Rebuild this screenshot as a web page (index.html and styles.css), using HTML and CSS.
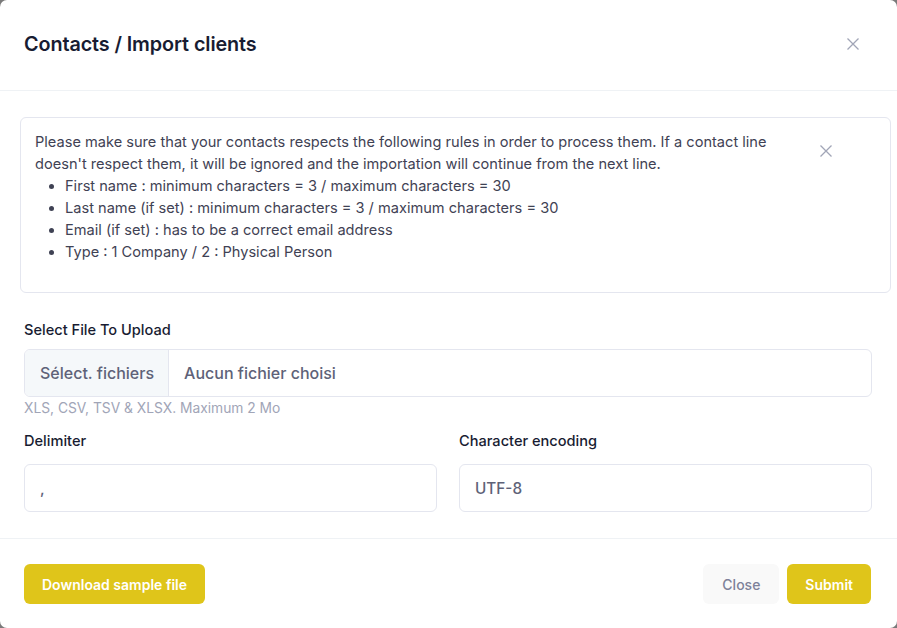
FILE: index.html
```html
<!DOCTYPE html>
<html>
<head>
<meta charset="utf-8">
<link rel="stylesheet" href="styles.css">
</head>
<body>
<div class="modal">
  <div class="modal-header">
    <h2 class="title">Contacts / Import clients</h2>
    <span class="close-x">
      <svg width="14" height="14" viewBox="0 0 14 14"><path d="M1.5 1.5 L12.5 12.5 M12.5 1.5 L1.5 12.5" stroke="#a1a5b7" stroke-width="1.3" fill="none"/></svg>
    </span>
  </div>
  <div class="modal-body">
    <div class="alert">
      <div class="alert-text">
        Please make sure that your contacts respects the following rules in order to process them. If a contact line doesn't respect them, it will be ignored and the importation will continue from the next line.
        <ul>
          <li>First name : minimum characters = 3 / maximum characters = 30</li>
          <li>Last name (if set) : minimum characters = 3 / maximum characters = 30</li>
          <li>Email (if set) : has to be a correct email address</li>
          <li>Type : 1 Company / 2 : Physical Person</li>
        </ul>
      </div>
      <span class="alert-close">
        <svg width="14" height="14" viewBox="0 0 14 14"><path d="M1.5 1.5 L12.5 12.5 M12.5 1.5 L1.5 12.5" stroke="#a1a5b7" stroke-width="1.3" fill="none"/></svg>
      </span>
    </div>

    <div class="field">
      <label class="label">Select File To Upload</label>
      <div class="file-input">
        <span class="file-btn">Sélect. fichiers</span>
        <span class="file-name">Aucun fichier choisi</span>
      </div>
      <div class="hint">XLS, CSV, TSV &amp; XLSX. Maximum 2 Mo</div>
    </div>

    <div class="row">
      <div class="col">
        <label class="label label-lg">Delimiter</label>
        <div class="input">,</div>
      </div>
      <div class="col">
        <label class="label label-lg">Character encoding</label>
        <div class="input">UTF-8</div>
      </div>
    </div>
  </div>
  <div class="modal-footer">
    <button class="btn btn-primary">Download sample file</button>
    <div class="footer-right">
      <button class="btn btn-light">Close</button>
      <button class="btn btn-primary">Submit</button>
    </div>
  </div>
</div>
</body>
</html>
```

FILE: styles.css
```css
* { box-sizing: border-box; }
html, body { margin: 0; padding: 0; }
body {
  background: #7a7a7a;
  font-family: Inter, "Liberation Sans", sans-serif;
  width: 897px;
  height: 628px;
  overflow: hidden;
}
.modal {
  background: #ffffff;
  width: 897px;
  height: 628px;
  border-radius: 7px;
  display: flex;
  flex-direction: column;
}
.modal-header {
  height: 91px;
  border-bottom: 1px solid #eff2f5;
  display: flex;
  align-items: center;
  justify-content: space-between;
  padding: 0 37px 0 24px;
}
.title {
  margin: 0;
  font-size: 19.8px;
  font-weight: 600;
  color: #181c32;
  letter-spacing: -0.1px;
  margin-top: -3px;
}
.close-x { display: flex; margin-top: -3px; }
.modal-body {
  padding: 26px 25px 26px 24px;
  border-bottom: 1px solid #eff2f5;
}
.alert {
  margin: 0 -19px 0 -4px;
  border: 1px solid #e4e6ef;
  border-radius: 6px;
  padding: 13px 57px 19px 14px;
  display: flex;
  color: #3f4254;
  font-size: 14.6px;
  line-height: 22px;
}
.alert-text { flex: 1; padding-right: 30px; }
.alert-text ul { margin: 0 0 10px 0; padding-left: 30px; }
.alert-close { display: flex; padding-top: 13px; }
.field { margin-top: 27px; }
.label {
  display: block;
  font-size: 14.6px;
  font-weight: 500;
  color: #181c32;
  line-height: 20px;
  margin-bottom: 9px;
}
.label-lg { margin-bottom: 13px; }
.file-input {
  display: flex;
  height: 48px;
  border: 1px solid #e4e6ef;
  border-radius: 6px;
  overflow: hidden;
  font-size: 16px;
  color: #5e6278;
}
.file-btn {
  background: #f5f8fa;
  border-right: 1px solid #e4e6ef;
  display: flex;
  align-items: center;
  padding: 0 14px 0 15px;
  font-weight: 500;
}
.file-name {
  display: flex;
  align-items: center;
  padding: 0 15px;
  font-weight: 500;
}
.hint {
  font-size: 13.8px;
  color: #a1a5b7;
  line-height: 18px;
  margin-top: 2px;
}
.row {
  display: grid;
  grid-template-columns: 1fr 1fr;
  gap: 22px;
  margin-top: 14px;
}
.input {
  height: 48px;
  border: 1px solid #e4e6ef;
  border-radius: 6px;
  display: flex;
  align-items: center;
  padding: 0 15px;
  font-size: 15.3px;
  font-weight: 500;
  color: #5e6278;
}
.modal-footer {
  flex: 1;
  display: flex;
  justify-content: space-between;
  align-items: flex-start;
  padding: 25px 26px 0 24px;
}
.footer-right { display: flex; gap: 8px; }
.btn {
  height: 40px;
  border: none;
  border-radius: 6px;
  font-family: Inter, "Liberation Sans", sans-serif;
  font-size: 14px;
  font-weight: 600;
  padding: 0 18px;
  cursor: pointer;
}
.btn-primary { background: #dfc51a; color: #ffffff; }
.btn-light { background: #f9f9f9; color: #7e8299; font-weight: 500; padding: 0 19px; }
```
